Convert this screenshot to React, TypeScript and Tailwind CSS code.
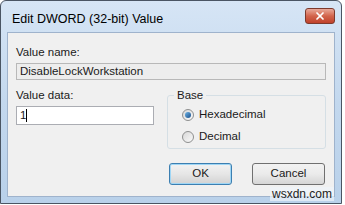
import { X } from "lucide-react";

function Radio({ checked, label }: { checked?: boolean; label: string }) {
    return (
        <div className="flex items-center gap-[5px]">
            <div className="w-[12px] h-[12px] rounded-full border border-[#8e8f8f] bg-gradient-to-br from-[#d8d8d8] to-[#fafafa] flex items-center justify-center">
                {checked && (
                    <div className="w-[6px] h-[6px] rounded-full bg-gradient-to-br from-[#6fb4e6] to-[#1a4f8a]" />
                )}
            </div>
            <span>{label}</span>
        </div>
    );
}

export default function App() {
    return (
        <div className="w-[345px] h-[205px] bg-white relative" style={{ fontFamily: '"Liberation Sans", Arial, sans-serif' }}>
            <div className="w-[342px] h-[204px] border border-[#4a5563] rounded-t-[6px] bg-gradient-to-b from-[#d6e5f5] via-[#c3d8ee] to-[#b9d1ea] flex flex-col">
                {/* Title bar */}
                <div className="h-[31px] flex items-center justify-between pl-[11px] pr-[6px]">
                    <span className="text-[12.5px] text-black pt-[6px]">Edit DWORD (32-bit) Value</span>
                    <div className="w-[30px] h-[16px] mb-[1px] rounded-[3px] border border-[#7d3a2c] bg-gradient-to-b from-[#e8a99a] via-[#d2644c] to-[#c0412a] flex items-center justify-center">
                        <X size={12} strokeWidth={3.5} className="text-white" />
                    </div>
                </div>
                {/* Client area */}
                <div className="mx-[6px] h-[165px] w-[328px] border border-[#9fb3cc] bg-[#f0f0f0] text-[11.5px] text-[#1a1a1a] flex flex-col px-[8px]">
                    <div className="mt-[12px] leading-[14px]">Value name:</div>
                    <div className="mt-[4px] h-[17px] border border-[#b8b8b8] bg-[#ededed] pl-[3px] leading-[15px]">
                        DisableLockWorkstation
                    </div>
                    <div className="flex mt-[8px] gap-[13px]">
                        <div className="flex flex-col w-[138px]">
                            <div className="leading-[14px]">Value data:</div>
                            <div className="mt-[4px] h-[19px] border border-[#abadb3] bg-white pl-[3px] flex items-center">
                                <span>1</span>
                                <span className="w-px h-[13px] bg-black" />
                            </div>
                        </div>
                        <div className="relative flex-1 mt-[7px] h-[54px] border border-[#d5dfe5] rounded-[3px] flex flex-col gap-[5px] pl-[14px] pt-[10px]">
                            <span className="absolute -top-[8px] left-[6px] px-[3px] bg-[#f0f0f0] leading-[14px]">Base</span>
                            <Radio checked label="Hexadecimal" />
                            <Radio label="Decimal" />
                        </div>
                    </div>
                    <div className="flex justify-end gap-[20px] mt-[14px] pr-[1px]">
                        <button className="w-[63px] h-[22px] rounded-[3px] border border-[#3c7fb1] bg-gradient-to-b from-[#f2f2f2] via-[#e6e6e6] to-[#d2d2d2] shadow-[inset_0_0_0_1px_#9fd6f5]">OK</button>
                        <button className="w-[73px] h-[22px] rounded-[3px] border border-[#707070] bg-gradient-to-b from-[#f2f2f2] via-[#ebebeb] to-[#d5d5d5]">Cancel</button>
                    </div>
                </div>
            </div>
            <span className="absolute right-[11px] bottom-[4px] text-[12px] text-[#222] leading-[14px] bg-[#eef3f9]/70 px-[2px]">wsxdn.com</span>
        </div>
    );
}
